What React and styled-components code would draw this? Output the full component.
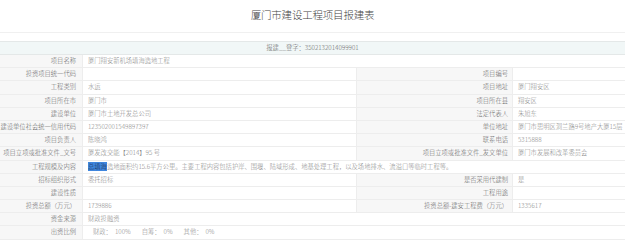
import React from 'react';
import styled, {createGlobalStyle} from 'styled-components';

const GlobalStyle = createGlobalStyle`
  html, body { margin: 0; padding: 0; background: #fff; }
  body { font-family: "Noto Sans CJK SC", "Noto Sans", sans-serif; }
`;

const Page = styled.div`
  width: 625px;
  height: 240px;
  overflow: hidden;
  background: #fff;
`;

const Title = styled.h1`
  margin: 0;
  height: 33px;
  box-sizing: border-box;
  border-bottom: 1px solid #f0f0f0;
  font-size: 10.5px;
  font-weight: 300;
  color: #444;
  text-align: center;
  line-height: 30px;
  letter-spacing: -0.2px;
`;

const Header = styled.div`
  margin-top: 8px;
  height: 14px;
  box-sizing: border-box;
  border-top: 1px solid #e4e8e8;
  border-bottom: 1px solid #e4e8e8;
  background: #f1f7f7;
  color: #666;
  font-size: 6.3px;
  font-weight: 300;
  line-height: 12px;
  text-align: center;
`;

const Grid = styled.div`
  display: grid;
  grid-template-columns: 83px 274px 156px 1fr;
  grid-auto-rows: 13.2px;
`;

const Cell = styled.div`
  box-sizing: border-box;
  border-bottom: 1px solid #ededed;
  border-right: ${p => (p.$last ? 'none' : '1px solid #ededed')};
  font-size: 6.3px;
  font-weight: 300;
  line-height: 12px;
  white-space: nowrap;
  overflow: hidden;
  grid-column: ${p => p.$span || 'auto'};
`;

const Label = styled(Cell)`
  background: #f7f7f7;
  color: #666;
  text-align: right;
  padding-right: ${p => (p.$second ? '4px' : '6px')};
`;

const Value = styled(Cell)`
  background: #fff;
  color: #888;
  padding-left: 5px;
`;

const Mark = styled.span`
  background: #3f86de;
  color: #1d2c4c;
`;

const Ratio = styled.span`
  display: inline-block;
  margin-left: ${p => p.$gap || 0}px;
`;

const rows = [
  ['项目名称', '厦门翔安新机场填海造地工程'],
  ['投资项目统一代码', '', '项目编号', ''],
  ['工程类别', '水运', '项目地址', '厦门翔安区'],
  ['项目所在市', '厦门市', '项目所在县', '翔安区'],
  ['建设单位', '厦门市土地开发总公司', '法定代表人', '朱旭东'],
  ['建设单位社会统一信用代码', '123502001549897397', '单位地址', '厦门市思明区洞兰路9号地产大厦15层'],
  ['项目负责人', '陈晓鸿', '联系电话', '5315888'],
  ['项目立项或批准文件_文号', '厦发改交能【2014】95 号', '项目立项或批准文件_发文单位', '厦门市发展和改革委员会'],
  ['工程规模及内容', 'scale'],
  ['招标组织形式', '委托招标', '是否采用代建制', '是'],
  ['建设性质', '', '工程用途', ''],
  ['投资总额（万元）', '1739886', '投资总额-建安工程费（万元）', '1335617'],
  ['资金来源', '财政投融资'],
  ['出资比例', 'ratio'],
];

function renderValue(v) {
  if (v === 'scale') {
    return (
      <>
        <Mark>总填海</Mark>造地面积约15.6平方公里。主要工程内容包括护岸、围堰、陆域形成、地基处理工程，以及场地排水、流溢口等临时工程等。
      </>
    );
  }
  if (v === 'ratio') {
    return (
      <>
        <Ratio $gap={5}>财政：</Ratio>
        <Ratio $gap={3}>100%</Ratio>
        <Ratio $gap={11}>自筹：</Ratio>
        <Ratio $gap={3}>0%</Ratio>
        <Ratio $gap={11}>其他：</Ratio>
        <Ratio $gap={3}>0%</Ratio>
      </>
    );
  }
  return v;
}

export default function App() {
  return (
    <Page>
      <GlobalStyle />
      <Title>厦门市建设工程项目报建表</Title>
      <Header>报建__登字：3502132014099901</Header>
      <Grid>
        {rows.map((r, i) =>
          r.length === 2 ? (
            <React.Fragment key={i}>
              <Label>{r[0]}</Label>
              <Value $span="2 / 5" $last>{renderValue(r[1])}</Value>
            </React.Fragment>
          ) : (
            <React.Fragment key={i}>
              <Label>{r[0]}</Label>
              <Value>{r[1]}</Value>
              <Label $second>{r[2]}</Label>
              <Value $second $last>{r[3]}</Value>
            </React.Fragment>
          )
        )}
      </Grid>
    </Page>
  );
}
